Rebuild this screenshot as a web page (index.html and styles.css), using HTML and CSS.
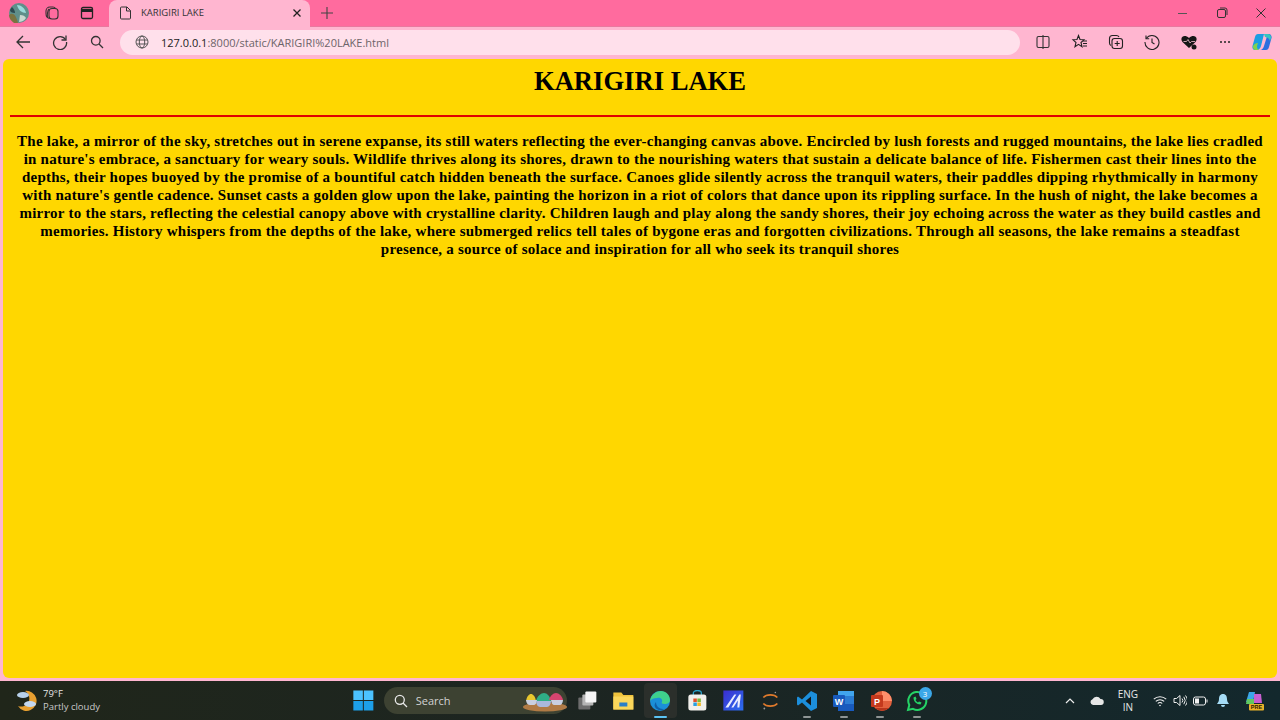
FILE: index.html
```html
<!DOCTYPE html>
<html lang="en">
<head>
  <meta charset="UTF-8" />
  <title>KARIGIRI LAKE</title>
  <link rel="stylesheet" href="styles.css">
</head>
<body>
  <div class="tabstrip">
    <div class="strip-left">
      <svg class="avatar" width="20" height="20" viewBox="0 0 20 20">
        <circle cx="10" cy="10" r="10" fill="#5f8f8a"/>
        <path d="M0 12c4-3 7 0 9 8H5C2 18 0 15 0 12z" fill="#7a7340"/>
        <path d="M8 2c4 0 8 3 9 8-4 0-8-3-9-8z" fill="#9adada"/>
        <path d="M3 4c2 2 3 4 3 6-3 0-5-1-5-3z" fill="#2d4a50"/>
        <path d="M11 12c3 0 5 1 6 3-2 3-5 4-7 4z" fill="#c9d8d0"/>
      </svg>
      <svg class="strip-icon" width="16" height="16" viewBox="0 0 16 16" fill="none" stroke="#333" stroke-width="1.100">
        <rect x="5" y="3.500" width="9" height="10.500" rx="3"/>
        <path d="M5.500 13.500C3.500 13 2 11 2 8.500V6c0-2 1.500-4 4-4h3c1.200 0 2 .5 2.500 1.500"/>
        <path d="M3.500 12C3 11 3.500 5 5 4"/>
      </svg>
      <svg class="strip-icon" width="16" height="16" viewBox="0 0 16 16" fill="none" stroke="#222" stroke-width="1.300">
        <rect x="2.500" y="2.500" width="11" height="11" rx="1.500"/>
        <path d="M2.500 5.500h11" stroke-width="3"/>
      </svg>
    </div>
    <div class="tab">
      <svg width="14" height="14" viewBox="0 0 14 14" fill="none" stroke="#333" stroke-width="1">
        <path d="M2.500 1h5.500l3.500 3.500v7.500a1 1 0 0 1-1 1h-8a1 1 0 0 1-1-1v-10a1 1 0 0 1 1-1z"/>
        <path d="M7.500 1v4h4"/>
      </svg>
      <span class="tab-title">KARIGIRI LAKE</span>
      <svg class="tab-close" width="10" height="10" viewBox="0 0 10 10" stroke="#222" stroke-width="1.300">
        <path d="M1.500 1.500l7 7M8.500 1.500l-7 7"/>
      </svg>
    </div>
    <svg class="new-tab" width="14" height="14" viewBox="0 0 14 14" stroke="#444" stroke-width="1.100">
      <path d="M7 1v12M1 7h12"/>
    </svg>
    <div class="window-btns">
      <svg width="12" height="12" viewBox="0 0 12 12" stroke="#555" stroke-width="1"><path d="M1 6.500h9"/></svg>
      <svg width="12" height="12" viewBox="0 0 12 12" fill="none" stroke="#333" stroke-width="1">
        <rect x="1.500" y="2.500" width="8" height="8" rx="1.500"/>
        <path d="M4 1h5a2 2 0 0 1 2 2v5"/>
      </svg>
      <svg width="12" height="12" viewBox="0 0 12 12" stroke="#333" stroke-width="1"><path d="M1.500 1.500l9 9M10.500 1.500l-9 9"/></svg>
    </div>
  </div>

  <div class="toolbar">
    <svg class="nav-back" width="16" height="16" viewBox="0 0 16 16" fill="none" stroke="#333" stroke-width="1.300">
      <path d="M15 8H2M8 2L2 8l6 6"/>
    </svg>
    <svg class="nav-reload" width="16" height="16" viewBox="0 0 16 16" fill="none" stroke="#333" stroke-width="1.300">
      <path d="M13.500 5.500A6.500 6.500 0 1 0 14.500 8"/>
      <path d="M14 1.500v4.500h-4.500"/>
    </svg>
    <svg class="nav-search" width="14" height="14" viewBox="0 0 14 14" fill="none" stroke="#333" stroke-width="1.300">
      <circle cx="5.800" cy="5.800" r="4.300"/>
      <path d="M9 9l4 4"/>
    </svg>
    <div class="address">
      <svg width="14" height="14" viewBox="0 0 14 14" fill="none" stroke="#555" stroke-width="1">
        <circle cx="7" cy="7" r="6"/>
        <ellipse cx="7" cy="7" rx="2.700" ry="6"/>
        <path d="M1.500 5h11M1.500 9h11"/>
      </svg>
      <span class="url"><span class="url-host">127.0.0.1</span>:8000/static/KARIGIRI%20LAKE.html</span>
    </div>
    <div class="tools">
      <svg width="16" height="16" viewBox="0 0 16 16" fill="none" stroke="#333" stroke-width="1.100">
        <rect x="2" y="2.500" width="12" height="11" rx="1.500"/><path d="M8 1v14"/>
      </svg>
      <svg width="16" height="16" viewBox="-1 0 16 16" fill="none" stroke="#222" stroke-width="1.100">
        <path d="M6.500 1.500l1.500 4 4 .3-3 2.700 1 4.200-3.500-2.300-3.500 2.300 1-4.200-3-2.700 4-.3z"/>
        <path d="M11 7h4M11 9.500h4M11 12h4"/>
      </svg>
      <svg width="16" height="16" viewBox="0 0 16 16" fill="none" stroke="#222" stroke-width="1.100">
        <path d="M3 11.500c-1-.5-1.500-1.500-1.500-2.500V4.500c0-1.500 1-3 3-3h4c1 0 2 .5 2.500 1.500"/>
        <rect x="4" y="4.500" width="10.500" height="10" rx="2.500"/>
        <path d="M9.200 7v5M6.700 9.500h5"/>
      </svg>
      <svg width="16" height="16" viewBox="0 0 16 16" fill="none" stroke="#222" stroke-width="1.100">
        <path d="M2.200 4.500A7 7 0 1 1 1 8"/>
        <path d="M2 1.500v3.200h3.200M8 4.500v4l2.500 1.500"/>
      </svg>
      <svg width="16" height="15" viewBox="0 0 16 15">
        <path d="M8 13L1.500 7C0 5.300 0 3 1.500 1.800S5.500.8 8 3c2.500-2.200 5-2.400 6.500-1.200S16 5.300 14.500 7z" fill="#161616"/>
        <path d="M2.500 6.500h3l1.500-2 2 3.500 1.500-1.500h3.500" fill="none" stroke="#f3c0d0" stroke-width=".8"/>
        <circle cx="13" cy="12" r="2.500" fill="#161616"/>
      </svg>
      <span class="more-dots"><i></i><i></i><i></i></span>
      <svg width="20" height="20" viewBox="0 0 20 20">
        <path d="M6 2h6l-3 12c-.5 2-2 4-4 4H3c-2 0-3-2-2.500-4L3 5c.4-1.800 1.500-3 3-3z" fill="#1b9de2"/>
        <path d="M8 18h6c1.500 0 2.600-1.200 3-3l2.500-9C20 4 18.500 2 17 2h-5c2 0 3 2 2.500 4L12 14c-.5 2-2 4-4 4z" fill="#2c6ee0"/>
        <path d="M12 2h4c2 0 3.500 2 3 4l-1 3c-1-3-3-4-5-4z" fill="#36c6c0"/>
        <path d="M1 14c-.5 2 1 4 2.500 4H8c-2.500 0-3-2-3-4l1-3c-2 0-4 1-5 3z" fill="#7fd14e"/>
      </svg>
    </div>
  </div>

  <main class="page">
    <h1>KARIGIRI LAKE</h1>
    <hr>
    <p>The lake, a mirror of the sky, stretches out in serene expanse, its still waters reflecting the ever-changing canvas above. Encircled by lush forests and rugged mountains, the lake lies cradled in nature's embrace, a sanctuary for weary souls. Wildlife thrives along its shores, drawn to the nourishing waters that sustain a delicate balance of life. Fishermen cast their lines into the depths, their hopes buoyed by the promise of a bountiful catch hidden beneath the surface. Canoes glide silently across the tranquil waters, their paddles dipping rhythmically in harmony with nature's gentle cadence. Sunset casts a golden glow upon the lake, painting the horizon in a riot of colors that dance upon its rippling surface. In the hush of night, the lake becomes a mirror to the stars, reflecting the celestial canopy above with crystalline clarity. Children laugh and play along the sandy shores, their joy echoing across the water as they build castles and memories. History whispers from the depths of the lake, where submerged relics tell tales of bygone eras and forgotten civilizations. Through all seasons, the lake remains a steadfast presence, a source of solace and inspiration for all who seek its tranquil shores</p>
  </main>

  <footer class="taskbar">
    <div class="weather">
      <svg width="24" height="24" viewBox="0 0 24 24">
        <path d="M10 3a10 10 0 1 1-7 15c6 2 13-2 11-10-.5-2-2-4-4-5z" fill="#e8a030"/>
        <ellipse cx="8" cy="7" rx="6" ry="3" fill="#b8d0ea"/>
        <ellipse cx="15" cy="16" rx="6" ry="3" fill="#c4d8f0"/>
      </svg>
      <div class="weather-text">
        <span>79°F</span>
        <span class="weather-desc">Partly cloudy</span>
      </div>
    </div>

    <div class="task-icons">
      <svg class="task-icon" width="22" height="22" viewBox="0 0 22 22">
        <rect x="1" y="1" width="9.500" height="9.500" fill="#4cc2ff"/>
        <rect x="11.500" y="1" width="9.500" height="9.500" fill="#4cc2ff"/>
        <rect x="1" y="11.500" width="9.500" height="9.500" fill="#1d9fe8"/>
        <rect x="11.500" y="11.500" width="9.500" height="9.500" fill="#1d9fe8"/>
      </svg>
      <div class="search-box">
        <svg width="14" height="14" viewBox="0 0 14 14" fill="none" stroke="#e8e8e8" stroke-width="1.300">
          <circle cx="5.800" cy="5.800" r="4.500"/><path d="M9 9l4 4"/>
        </svg>
        <span class="search-label">Search</span>
        <svg class="search-art" width="44" height="22" viewBox="0 0 44 22">
          <ellipse cx="22" cy="17" rx="22" ry="4.500" fill="#b07a45"/>
          <path d="M3 11c1-5 3-7 5-7s4 2 5 7z" fill="#e8c72e"/>
          <path d="M13 11c1-5 5-8 8-8s6 3 7 8z" fill="#2fae86"/>
          <path d="M26 10c1-4 4-7 7-7s6 3 7 7z" fill="#d8456f"/>
          <path d="M3 10h11c0 3-2 5-3 5H7c-2 0-4-2-4-5z" fill="#c9cfe0"/>
          <path d="M13 11h15c0 3-2 6-4 6h-7c-2 0-4-3-4-6z" fill="#aab8dc"/>
          <path d="M28 10h12c0 3-2 5-3 5h-6c-1 0-3-2-3-5z" fill="#c9cfe0"/>
        </svg>
      </div>
      <svg class="task-icon" width="22" height="22" viewBox="0 0 22 22">
        <rect x="2" y="8" width="12" height="12" rx="1" fill="#6d6d6d"/>
        <rect x="6" y="5" width="11" height="11" rx="1" fill="#b5b5b5"/>
        <rect x="9" y="2" width="11" height="11" rx="1" fill="#f5f5f5"/>
      </svg>
      <svg class="task-icon" width="22" height="22" viewBox="0 0 22 22">
        <path d="M1 3h8l2 2.500h10V20H1z" fill="#f0c33c"/>
        <path d="M1 7h20v13H1z" fill="#fbd75b"/>
        <rect x="7" y="13" width="8" height="4" fill="#2a7fc8"/>
      </svg>
      <div class="task-icon edge-slot">
        <svg width="22" height="22" viewBox="0 0 22 22">
          <circle cx="11" cy="11" r="10" fill="#1b8fd8"/>
          <path d="M1 11C2 4 8 1 12 1c5 0 9 4 9 9 0 3-3 4-5 4-3 0-4-1-3-2 1-3-2-5-5-4-3 0-6 1-7 3z" fill="#3fd08c"/>
          <path d="M7 12c0 4 3 7 7 7 1 0 2 0 3-1-3 3-9 3-11-1-1-2 0-4 1-5z" fill="#0f5fa8"/>
        </svg>
        <i class="active-bar"></i>
      </div>
      <svg class="task-icon" width="22" height="22" viewBox="0 0 22 22">
        <path d="M7 6V3.500C7 2 9 1 11 1s4 1 4 2.500V6" fill="none" stroke="#2aa0c8" stroke-width="1.300"/>
        <rect x="2" y="5" width="18" height="16" rx="2.500" fill="#f2f0ec"/>
        <rect x="7" y="9" width="3.500" height="3.500" fill="#e2502b"/>
        <rect x="11" y="9" width="3.500" height="3.500" fill="#7db93a"/>
        <rect x="7" y="13" width="3.500" height="3.500" fill="#2a9fe0"/>
        <rect x="11" y="13" width="3.500" height="3.500" fill="#f2b71e"/>
      </svg>
      <svg class="task-icon" width="22" height="22" viewBox="0 0 22 22">
        <defs>
          <linearGradient id="mtile" x1="0" y1="0" x2="1" y2="1">
            <stop offset="0" stop-color="#3b2ed0"/><stop offset="1" stop-color="#2b6ff0"/>
          </linearGradient>
        </defs>
        <rect x="1" y="1" width="20" height="20" fill="url(#mtile)"/>
        <path d="M3 18L12 5h2L6 18zM9 18l8-13h1.500L17 18h-2l.5-7-4.500 7z" fill="#e8ecff"/>
      </svg>
      <svg class="task-icon" width="22" height="22" viewBox="0 0 22 22" fill="none" stroke="#e07a2c" stroke-width="1.600">
        <path d="M4 8c3-3.500 11-3.500 14 0"/>
        <path d="M4 14c3 3.500 11 3.500 14 0"/>
        <circle cx="16" cy="3" r=".8" fill="#999" stroke="none"/>
        <circle cx="5" cy="19" r=".9" fill="#999" stroke="none"/>
      </svg>
      <div class="task-icon">
        <svg width="22" height="22" viewBox="0 0 22 22">
          <path d="M15 1l6 3v14l-6 3L6 12.500 2 15.500 1 14.500V7.500l1-1 4 3z" fill="#1c8fdc"/>
          <path d="M15 6.500L9.500 11l5.500 4.500z" fill="#14181a"/>
        </svg>
        <i class="open-dot"></i>
      </div>
      <div class="task-icon">
        <svg width="22" height="22" viewBox="0 0 22 22">
          <rect x="5" y="1" width="16" height="20" rx="1.500" fill="#2b7cd3"/>
          <rect x="5" y="1" width="16" height="5" fill="#41a5ee"/>
          <rect x="5" y="14" width="16" height="7" fill="#185abd"/>
          <rect x="0" y="5" width="12" height="12" rx="1" fill="#185abd"/>
          <text class="tile-letter" x="6" y="14.500" text-anchor="middle">W</text>
        </svg>
        <i class="open-dot"></i>
      </div>
      <div class="task-icon">
        <svg width="22" height="22" viewBox="0 0 22 22">
          <circle cx="12" cy="11" r="10" fill="#e2603c"/>
          <path d="M12 1a10 10 0 0 1 10 10H12z" fill="#ff8f6b"/>
          <path d="M5 18h14a10 10 0 0 1-14 0z" fill="#b7361c"/>
          <rect x="1" y="5" width="12" height="12" rx="1" fill="#c4391d"/>
          <text class="tile-letter" x="7" y="14.500" text-anchor="middle">P</text>
        </svg>
        <i class="open-dot"></i>
      </div>
      <div class="task-icon whatsapp">
        <svg width="22" height="22" viewBox="0 0 22 22" fill="none" stroke="#25d366" stroke-width="2">
          <path d="M2 20l1.300-5A9 9 0 1 1 7 18.800z"/>
          <path d="M7.500 7.500c0 4 3 7 7 7l1-2-2.500-1-1 1c-1-.5-2-1.500-2.500-2.500l1-1-1-2.500z" fill="#25d366" stroke="none"/>
        </svg>
        <span class="badge">3</span>
        <i class="open-dot"></i>
      </div>
    </div>

    <div class="tray">
      <svg width="10" height="6" viewBox="0 0 10 6" fill="none" stroke="#eee" stroke-width="1.200"><path d="M1 5l4-4 4 4"/></svg>
      <svg class="tray-cloud" width="14" height="9" viewBox="0 0 14 9"><path d="M3 9a3 3 0 0 1-.5-5.800A4.500 4.500 0 0 1 10.500 3 3 3 0 0 1 11 9z" fill="#e6e6e6"/></svg>
      <div class="lang"><span>ENG</span><span>IN</span></div>
      <svg width="14" height="12" viewBox="0 0 14 12" fill="none" stroke="#f0f0f0" stroke-width="1.100">
        <path d="M.8 4.200a9 9 0 0 1 12.400 0M2.800 6.400a6 6 0 0 1 8.400 0M4.800 8.500a3 3 0 0 1 4.400 0"/>
        <circle cx="7" cy="10.500" r=".8" fill="#f0f0f0" stroke="none"/>
      </svg>
      <svg class="tray-volume" width="14" height="13" viewBox="0 0 14 13" fill="none" stroke="#f0f0f0" stroke-width="1">
        <path d="M1 4.500h2.500L7 1.500v10l-3.500-3H1z"/>
        <path d="M9 4.500a3 3 0 0 1 0 4M10.800 2.800a6 6 0 0 1 0 7.400M12.500 1.500a8 8 0 0 1 0 10"/>
      </svg>
      <svg class="tray-battery" width="15" height="10" viewBox="0 0 15 10" fill="none" stroke="#f0f0f0" stroke-width="1">
        <rect x=".5" y="1" width="12" height="8" rx="2"/><rect x="2" y="2.500" width="4" height="5" fill="#f0f0f0" stroke="none"/><path d="M14 3.500v3"/>
      </svg>
      <svg class="tray-bell" width="12" height="14" viewBox="0 0 12 14"><path d="M6 0c3 0 4 2.500 4 5 0 2 .8 3.500 2 5H0c1.200-1.500 2-3 2-5 0-2.500 1-5 4-5zM4 11h4a2 2 0 0 1-4 0z" fill="#a5dcf5"/></svg>
      <svg class="tray-copilot" width="20" height="20" viewBox="0 0 20 20">
        <path d="M5 1h6l-2 10H2z" fill="#3ba7e8"/>
        <path d="M10 3h7l1 9h-8z" fill="#c85fd0"/>
        <path d="M3 8h7v5H2z" fill="#60c860"/>
        <rect x="5" y="13" width="15" height="6.500" rx="1" fill="#eab32a"/>
        <text class="pre-label" x="12.500" y="18.300" text-anchor="middle">PRE</text>
      </svg>
    </div>
  </footer>
</body>
</html>
```

FILE: styles.css
```css
* {
  box-sizing: border-box;
}

html, body {
  height: 100%;
}

body {
  margin: 0;
  height: 720px;
  overflow: hidden;
  display: flex;
  flex-direction: column;
  background-color: #ffb6d0;
  font-family: "Open Sans", "Noto Sans", sans-serif;
}

svg {
  display: block;
  flex-shrink: 0;
}

/* browser chrome */
.tabstrip {
  height: 27px;
  display: flex;
  align-items: flex-end;
  background-color: #ff6b9e;
  border-bottom: 1px solid #e8799f;
}

.strip-left {
  width: 109px;
  height: 26px;
  padding-left: 9px;
  display: flex;
  align-items: center;
}

.strip-icon {
  margin-left: 15px;
}

.strip-icon:nth-child(3) {
  margin-left: 19px;
}

.tab {
  width: 201px;
  height: 27px;
  margin-bottom: -1px;
  padding: 0 8px 2px 10px;
  display: flex;
  align-items: center;
  background-color: #ffb6d0;
  border-radius: 8px 8px 0 0;
}

.tab-title {
  margin-left: 8px;
  font-size: 9.500px;
  color: #333;
  flex: 1;
}

.new-tab {
  margin: 0 0 6px 10px;
}

.window-btns {
  margin-left: auto;
  height: 26px;
  display: flex;
  align-items: center;
  gap: 27px;
  padding-right: 13px;
}

.toolbar {
  height: 32px;
  display: flex;
  align-items: center;
  padding: 0 0 2px 15px;
  background-color: #ffb6d0;
}

.nav-reload {
  margin-left: 21px;
}

.nav-search {
  margin-left: 22px;
}

.address {
  margin-left: 16px;
  width: 900px;
  height: 25px;
  padding-left: 15px;
  display: flex;
  align-items: center;
  background-color: #ffe0eb;
  border-radius: 13px;
}

.url {
  margin-left: 12px;
  font-size: 11px;
  color: #6d6469;
}

.url-host {
  color: #222;
}

.tools {
  margin-left: 5px;
  display: grid;
  grid-auto-flow: column;
  grid-auto-columns: 36.500px;
  justify-items: center;
  align-items: center;
}

.more-dots {
  display: flex;
  gap: 2px;
}

.more-dots i {
  width: 2px;
  height: 2px;
  background-color: #222;
  border-radius: 50%;
}

/* page content */
.page {
  flex: 1;
  margin: 0 3px 3px;
  padding: 0 7px;
  background-color: #ffd700;
  border-radius: 6px;
  text-align: center;
  font-family: "Liberation Serif", serif;
  color: #000;
}

h1 {
  margin: 6px 0 0;
  font-size: 26.600px;
  line-height: 32px;
}

hr {
  margin: 18px 0 0;
  height: 2px;
  border: 0;
  background-color: #e00000;
}

p {
  margin: 15px 0 0;
  font-size: 15px;
  line-height: 18px;
  font-weight: bold;
  letter-spacing: 0.240px;
}

/* windows taskbar */
.taskbar {
  height: 39px;
  display: flex;
  align-items: center;
  background: linear-gradient(90deg, #20261a, #1c2522 50%, #13282d);
  color: #e8e8e8;
}

.weather {
  width: 345px;
  padding: 0 0 2px 15px;
  display: flex;
  align-items: center;
  gap: 4px;
}

.weather-text {
  display: flex;
  flex-direction: column;
  font-size: 9.500px;
  line-height: 13px;
}

.weather-desc {
  color: #c9c9c9;
}

.task-icons {
  display: flex;
  align-items: center;
}

.task-icon {
  position: relative;
  width: 36.700px;
  height: 39px;
  padding: 0 7px;
  display: flex;
  align-items: center;
  justify-content: center;
}

svg.task-icon {
  padding: 8.500px 7.350px;
}

.edge-slot {
  padding: 0 5px;
  background-color: #2b2f2b;
  background-clip: padding-box;
  border: 2px solid transparent;
  border-radius: 6px;
}

.active-bar {
  position: absolute;
  left: 10px;
  bottom: 0;
  width: 13px;
  height: 2px;
  border-radius: 1px;
  background-color: #5cc4f4;
}

.open-dot {
  position: absolute;
  left: 14px;
  bottom: 2px;
  width: 8px;
  height: 2px;
  border-radius: 1px;
  background-color: #8f9595;
}

.tile-letter {
  font: bold 9px "Liberation Sans", sans-serif;
  fill: #fff;
}

.pre-label {
  font: bold 5.500px "Liberation Sans", sans-serif;
  fill: #2a2000;
}

.badge {
  position: absolute;
  top: 6px;
  right: 4px;
  width: 13px;
  height: 13px;
  border-radius: 50%;
  background-color: #3ba7e8;
  font-size: 8px;
  line-height: 13px;
  text-align: center;
  color: #fff;
}

.search-box {
  width: 183px;
  height: 27px;
  margin: 0 2px;
  padding-left: 10px;
  display: flex;
  align-items: center;
  background-color: #3d4232;
  border-radius: 14px;
}

.search-label {
  margin-left: 8px;
  font-size: 11px;
  color: #d2d2d2;
  flex: 1;
}

.tray {
  margin-left: auto;
  padding-right: 16px;
  display: flex;
  align-items: center;
}

.tray-cloud {
  margin-left: 15px;
}

.lang {
  margin: 0 15px 0 14px;
  display: flex;
  flex-direction: column;
  align-items: center;
  font-size: 10px;
  line-height: 13px;
}

.tray-volume {
  margin-left: 6px;
}

.tray-battery {
  margin-left: 5.500px;
}

.tray-bell {
  margin-left: 9.500px;
}

.tray-copilot {
  margin-left: 15px;
}
```
